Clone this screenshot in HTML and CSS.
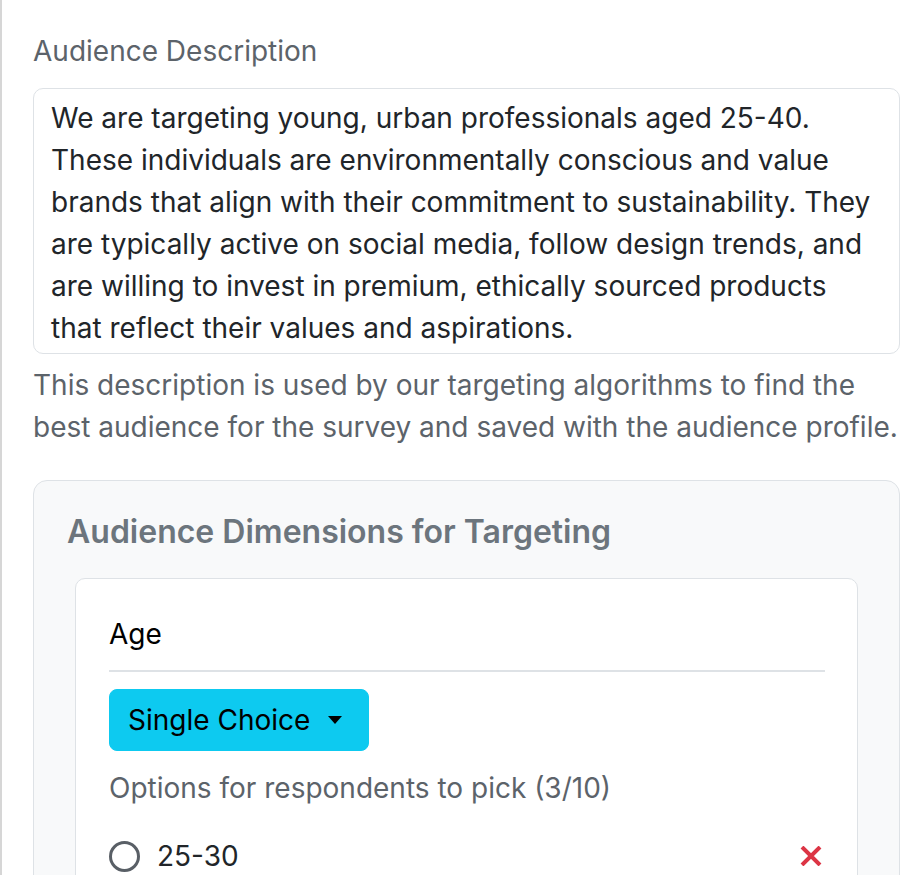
FILE: index.html
```html
<!DOCTYPE html>
<html lang="en">
<head>
<meta charset="utf-8">
<title>Audience</title>
<link rel="stylesheet" href="styles.css">
</head>
<body>
<div class="page">
  <label class="field-label" for="desc">Audience Description</label>
  <div class="textarea" id="desc">We are targeting young, urban professionals aged 25-40. These individuals are environmentally conscious and value brands that align with their commitment to sustainability. They are typically active on social media, follow design trends, and are willing to invest in premium, ethically sourced products that reflect their values and aspirations.</div>
  <p class="help">This description is used by our targeting algorithms to find the best audience for the survey and saved with the audience profile.</p>

  <section class="dims">
    <h5 class="dims-title">Audience Dimensions for Targeting</h5>
    <div class="dim-card">
      <div class="dim-name">Age</div>
      <button class="type-btn" type="button">Single Choice<span class="caret"></span></button>
      <div class="options-label">Options for respondents to pick (3/10)</div>
      <div class="option">
        <span class="radio"></span>
        <span class="option-text">25-30</span>
        <svg class="remove" width="22" height="20" viewBox="0 0 22 20" aria-hidden="true">
          <path d="M2 1 L20 19 M20 1 L2 19" stroke="#dc3545" stroke-width="4" fill="none"/>
        </svg>
      </div>
    </div>
  </section>
</div>
</body>
</html>
```
FILE: styles.css
```css
html, body {
  margin: 0;
  padding: 0;
  background: #ffffff;
}
body {
  border-left: 2px solid #d6d6d6;
  min-height: 875px;
  box-sizing: border-box;
  font-family: Inter, "Noto Sans", sans-serif;
  font-size: 28px;
  line-height: 42px;
  color: #212529;
}
.page {
  padding: 30px 13px 0 31px;
}
.field-label {
  display: block;
  color: #5c636a;
  margin-bottom: 16px;
}
.textarea {
  border: 1px solid #dee2e6;
  border-radius: 10px;
  padding: 8px 17px 4px 17px;
  height: 252px;
  overflow: hidden;
  color: #212529;
  background: #fff;
}
.help {
  margin: 10px 0 0 0;
  color: #5c636a;
  line-height: 42px;
}
.dims {
  margin-top: 32px;
  background: #f8f9fa;
  border: 1px solid #dee2e6;
  border-radius: 14px;
  padding: 32px 33px 0 33px;
  height: 500px;
}
.dims-title {
  margin: 0 0 27px 0;
  font-size: 32px;
  line-height: 38px;
  font-weight: 600;
  color: #6c757d;
}
.dim-card {
  margin: 0 8px;
  background: #fff;
  border: 1px solid #dee2e6;
  border-radius: 10px;
  padding: 34px 32px 0 33px;
  height: 400px;
}
.dim-name {
  color: #000;
  padding-bottom: 15px;
  border-bottom: 2px solid #dee2e6;
}
.type-btn {
  margin-top: 17px;
  display: inline-flex;
  align-items: center;
  font-family: inherit;
  font-size: 28px;
  line-height: 42px;
  color: #000;
  background: #0dcaf0;
  border: 1px solid #0dcaf0;
  border-radius: 8px;
  padding: 9px 26px 9px 18px;
}
.caret {
  display: inline-block;
  margin-left: 18px;
  width: 0;
  height: 0;
  border-top: 8px solid #000;
  border-left: 7px solid transparent;
  border-right: 7px solid transparent;
}
.options-label {
  margin-top: 16px;
  color: #5c636a;
}
.option {
  margin-top: 26px;
  display: flex;
  align-items: center;
}
.radio {
  width: 31px;
  height: 31px;
  box-sizing: border-box;
  border: 3px solid #595f66;
  border-radius: 50%;
  flex: none;
}
.option-text {
  margin-left: 17px;
  flex: 1;
  color: #212529;
}
.remove {
  margin-right: 3px;
  flex: none;
}
```
